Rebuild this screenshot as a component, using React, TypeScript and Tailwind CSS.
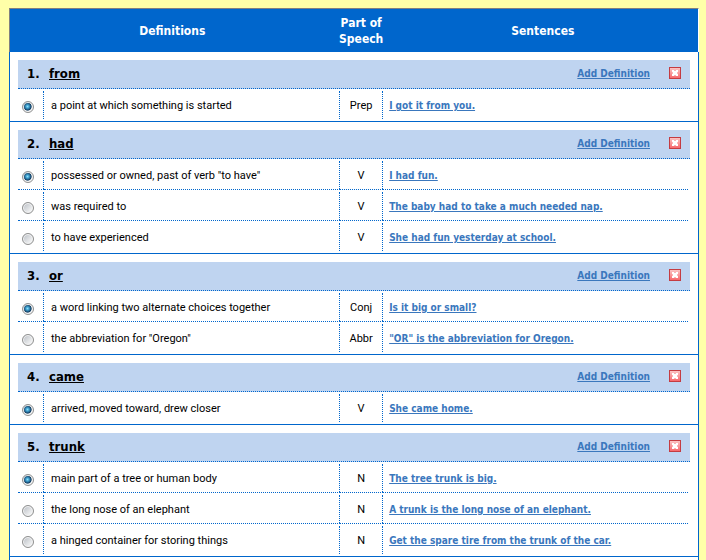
import { useState } from 'react'
import clsx from 'clsx'

interface Definition {
  text: string
  pos: string
  sentence: string
}

interface Word {
  word: string
  definitions: Definition[]
}

const WORDS: Word[] = [
  {
    word: 'from',
    definitions: [
      { text: 'a point at which something is started', pos: 'Prep', sentence: 'I got it from you.' },
    ],
  },
  {
    word: 'had',
    definitions: [
      { text: 'possessed or owned, past of verb "to have"', pos: 'V', sentence: 'I had fun.' },
      { text: 'was required to', pos: 'V', sentence: 'The baby had to take a much needed nap.' },
      { text: 'to have experienced', pos: 'V', sentence: 'She had fun yesterday at school.' },
    ],
  },
  {
    word: 'or',
    definitions: [
      { text: 'a word linking two alternate choices together', pos: 'Conj', sentence: 'Is it big or small?' },
      { text: 'the abbreviation for "Oregon"', pos: 'Abbr', sentence: '"OR" is the abbreviation for Oregon.' },
    ],
  },
  {
    word: 'came',
    definitions: [
      { text: 'arrived, moved toward, drew closer', pos: 'V', sentence: 'She came home.' },
    ],
  },
  {
    word: 'trunk',
    definitions: [
      { text: 'main part of a tree or human body', pos: 'N', sentence: 'The tree trunk is big.' },
      { text: 'the long nose of an elephant', pos: 'N', sentence: 'A trunk is the long nose of an elephant.' },
      { text: 'a hinged container for storing things', pos: 'N', sentence: 'Get the spare tire from the trunk of the car.' },
    ],
  },
]

const LINK = 'font-bold text-[#3a77bd] underline underline-offset-1'

function DeleteIcon() {
  return (
    <svg width="12" height="12" viewBox="0 0 12 12" shapeRendering="crispEdges" aria-hidden="true">
      <defs>
        <linearGradient id="del" x1="0" y1="0" x2="0" y2="1">
          <stop offset="0" stopColor="#fbc4c4" />
          <stop offset="1" stopColor="#f7686c" />
        </linearGradient>
      </defs>
      <rect width="12" height="12" fill="#c43c42" />
      <rect x="1" y="1" width="10" height="10" fill="url(#del)" />
      <rect x="3" y="3" width="6" height="6" fill="#fff" />
      <path d="M3 5h1v2H3zM8 5h1v2H8zM5 3h2v1H5zM5 8h2v1H5z" fill="#f8b4b6" />
    </svg>
  )
}

function DefinitionTable({ entry }: { entry: Word }) {
  const [selected, setSelected] = useState(0)
  const last = entry.definitions.length - 1

  return (
    <table className="w-full table-fixed border-separate border-spacing-0 pr-0.5 font-[Roboto,Tahoma,sans-serif] text-[11px] leading-4">
      <colgroup>
        <col className="w-[26px]" />
        <col className="w-[44.2%]" />
        <col className="w-[43px]" />
        <col />
      </colgroup>
      <tbody>
        {entry.definitions.map((d, i) => {
          const id = `${entry.word}-${i}`
          const cell = clsx('p-0 pt-0.5', i < last && 'border-b border-dotted border-[#0066cc]')
          const inner = 'flex h-7 items-center'
          const divider = 'border-r border-dotted border-[#0066cc]'
          return (
            <tr key={id}>
              <td className={cell}>
                <div className={clsx(inner, divider, 'pt-1 pl-1')}>
                  <input
                    id={id}
                    type="radio"
                    name={entry.word}
                    checked={selected === i}
                    onChange={() => setSelected(i)}
                    className="size-3 shrink-0 appearance-none rounded-full border border-[#8e8f8f] bg-[linear-gradient(135deg,#c6cacf_20%,#f2f3f4_80%)] shadow-[inset_0_0_0_1px_#f4f4f4] checked:bg-[radial-gradient(circle_at_45%_45%,#8fe0f8_0,#3a9ccc_22%,#123a5e_48%,#dfe5ea_58%,#f4f4f4_64%)]"
                  />
                </div>
              </td>
              <td className={cell}>
                <label htmlFor={id} className={clsx(inner, divider, 'pt-0.5 pl-[7px]')}>{d.text}</label>
              </td>
              <td className={cell}>
                <div className={clsx(inner, divider, 'justify-center pt-0.5')}>{d.pos}</div>
              </td>
              <td className={cell}>
                <div className={clsx(inner, "pt-0.5 pl-1.5 font-['DejaVu_Sans_Condensed',Tahoma,sans-serif] text-[10px]")}>
                  <a href="#" className={LINK}>{d.sentence}</a>
                </div>
              </td>
            </tr>
          )
        })}
      </tbody>
    </table>
  )
}

export default function App() {
  return (
    <main className="min-h-screen bg-[#ffffa8] pt-2 pr-[7px] pl-[9px] font-['DejaVu_Sans_Condensed',Tahoma,sans-serif] text-black">
      <table className="w-full table-fixed border-separate border-spacing-0 bg-white">
        <colgroup>
          <col className="w-[47.2%]" />
          <col className="w-[53px]" />
          <col />
        </colgroup>
        <thead className="bg-[#0066cc] text-xs leading-4 text-white">
          <tr className="h-11">
            <th className="border-t border-l border-[#808080] p-0">Definitions</th>
            <th className="border-t border-[#808080] p-0">Part of Speech</th>
            <th className="border-t border-r border-t-[#808080] border-r-white p-0">Sentences</th>
          </tr>
        </thead>
        <tbody>
          {WORDS.map((entry, i) => (
            <tr key={entry.word}>
              <td colSpan={3} className="border-x border-b border-[#0066cc] px-2 pt-2 pb-0.5">
                <div className="flex h-[29px] items-center border-b border-dotted border-[#0066cc] bg-[#bfd4f0] pr-[9px] pb-0.5 pl-[9px]">
                  <h2 className="flex flex-1 pt-0.5 text-[13px] leading-4 font-bold">
                    <span className="w-[22px]">{i + 1}.</span>
                    <a href="#" className="underline underline-offset-1">{entry.word}</a>
                  </h2>
                  <a href="#" className={clsx(LINK, 'mr-[19px] text-[10px]')}>Add Definition</a>
                  <button type="button" aria-label={`Delete ${entry.word}`}>
                    <DeleteIcon />
                  </button>
                </div>
                <DefinitionTable entry={entry} />
              </td>
            </tr>
          ))}
        </tbody>
        <tfoot>
          <tr>
            <td colSpan={3} className="h-[3px] border-x border-[#0066cc] p-0" />
          </tr>
        </tfoot>
      </table>
    </main>
  )
}
